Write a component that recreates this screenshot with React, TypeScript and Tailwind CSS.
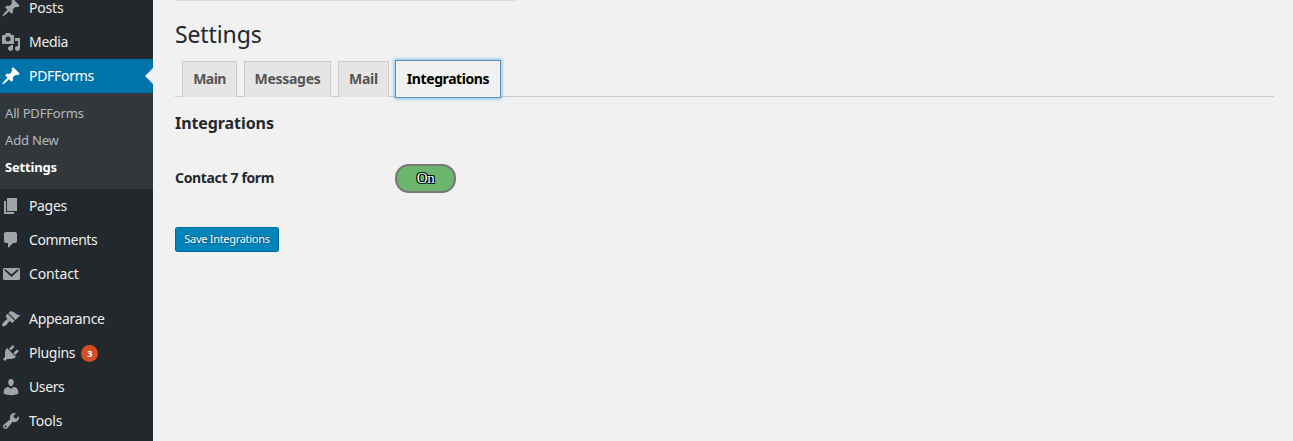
import type { ReactNode } from 'react';

const icons = {
  pin: 'M10.44 3.02l1.82-1.82 6.36 6.35-1.83 1.82c-1.05-.68-2.48-.57-3.41.36l-.75.75c-.92.93-1.04 2.35-.35 3.41l-1.83 1.82-2.41-2.41-2.8 2.79c-.42.42-3.38 2.71-3.8 2.29s1.86-3.39 2.28-3.81l2.79-2.79L4.1 9.36l1.83-1.82c1.05.69 2.48.57 3.4-.36l.75-.75c.93-.92 1.05-2.35.36-3.41z',
  media:
    'M13 11V4c0-.55-.45-1-1-1h-1.67L9 1H5L3.67 3H2c-.55 0-1 .45-1 1v7c0 .55.45 1 1 1h10c.55 0 1-.45 1-1zM7 4.5c1.38 0 2.5 1.12 2.5 2.5S8.38 9.5 7 9.5 4.5 8.38 4.5 7 5.62 4.5 7 4.5zM14 6h5v10.5c0 1.38-1.12 2.5-2.5 2.5S14 17.88 14 16.5s1.12-2.5 2.5-2.5c.17 0 .34.02.5.05V9h-3V6zm-4 8.05V13h2v3.5c0 1.38-1.12 2.5-2.5 2.5S7 17.88 7 16.5 8.12 14 9.5 14c.17 0 .34.02.5.05z',
  page: 'M6 15V2h10v13H6zm-1 1h8v2H3V5h2v11z',
  comment: 'M5 2h9c1.1 0 2 .9 2 2v7c0 1.1-.9 2-2 2h-2l-5 5v-5H5c-1.1 0-2-.9-2-2V4c0-1.1.9-2 2-2z',
  mail: 'M3.5 4h14c.83 0 1.5.67 1.5 1.5v9c0 .83-.67 1.5-1.5 1.5h-14c-.83 0-1.5-.67-1.5-1.5v-9C2 4.67 2.67 4 3.5 4zM4.3 5.3c-.7-.4-1.4.6-.8 1.2l7 6.4 7-6.4c.6-.6-.1-1.6-.8-1.2l-6.2 4.9z',
  brush:
    'M14.48 11.06L7.41 3.99l1.5-1.5c.5-.56 2.3-.47 3.51.32 1.21.8 1.43 1.28 2.91 2.1 1.18.64 2.45 1.26 4.45.85zm-.71.71L6.7 4.7 4.93 6.47c-.39.39-.39 1.02 0 1.41l1.06 1.06c.39.39.39 1.03 0 1.42-.6.6-1.43 1.11-2.21 1.69-.35.26-.7.53-1.01.84C1.43 14.23.4 16.08 1.4 17.07c.99 1 2.84-.03 4.18-1.36.31-.31.58-.66.85-1.02.57-.78 1.08-1.61 1.69-2.21.39-.39 1.02-.39 1.41 0l1.06 1.06c.39.39 1.02.39 1.41 0z',
  plug: 'M13.11 4.36L9.87 7.6 8 5.73l3.24-3.24c.35-.34 1.05-.2 1.56.32.52.51.66 1.21.31 1.55zm-8 1.77l.91-1.12 9.01 9.01-1.19.84c-.71.71-2.63 1.16-3.82 1.16H6.14L4.9 17.26c-.59.59-1.54.59-2.12 0-.59-.58-.59-1.53 0-2.12l1.24-1.24v-3.88c0-1.13.4-3.19 1.09-3.89zm7.26 3.97l3.24-3.24c.34-.35 1.04-.21 1.55.31.52.51.66 1.21.31 1.55l-3.24 3.25z',
  user: 'M10 9.25c-2.27 0-2.73-3.44-2.73-3.44C7 4.02 7.82 2 9.97 2c2.16 0 2.98 2.02 2.71 3.81 0 0-.41 3.44-2.68 3.44zm0 2.57L12.72 10c2.39 0 4.52 2.33 4.52 4.53v2.49s-3.65 1.13-7.24 1.13c-3.65 0-7.24-1.13-7.24-1.13v-2.49c0-2.25 1.94-4.48 4.47-4.48z',
  wrench:
    'M16.68 9.77c-1.34 1.34-3.3 1.67-4.95.99l-5.41 6.52c-.99.99-2.59.99-3.58 0s-.99-2.59 0-3.57l6.52-5.42c-.68-1.65-.35-3.61.99-4.95 1.28-1.28 3.12-1.62 4.72-1.06l-2.89 2.89 2.82 2.82 2.86-2.87c.53 1.58.18 3.39-1.08 4.65zM3.81 16.21c.4.39 1.04.39 1.43 0 .4-.4.4-1.04 0-1.43-.39-.4-1.03-.4-1.43 0-.39.39-.39 1.03 0 1.43z',
};

type ItemProps = {
  icon: keyof typeof icons;
  label: string;
  spacing?: string;
  active?: boolean;
  children?: ReactNode;
};

function MenuItem({ icon, label, spacing = '', active = false, children }: ItemProps) {
  return (
    <a
      className={`relative flex h-[34px] shrink-0 items-center pl-px text-[14px] leading-[14px] ${
        active ? 'bg-[#0073aa] text-white' : 'text-[#eeeeee]'
      }`}
    >
      <svg
        viewBox="0 0 20 20"
        className={`size-5 shrink-0 ${active ? 'text-white' : 'text-[#a0a5aa]'}`}
        fill="currentColor"
        fillRule="evenodd"
      >
        <path d={icons[icon]} />
      </svg>
      <span className={`ml-2 whitespace-nowrap ${spacing}`}>{label}</span>
      {children}
      {active && (
        <span className="absolute top-[9px] right-0 border-y-8 border-r-8 border-y-transparent border-r-[#f1f1f1]" />
      )}
    </a>
  );
}

function Tab({ label, className }: { label: string; className: string }) {
  return (
    <a
      className={`flex h-9 items-center justify-center border border-b-0 border-[#cccccc] bg-[#e5e5e5] pb-0.5 text-[14px] font-bold text-[#555555] ${className}`}
    >
      {label}
    </a>
  );
}

export default function App() {
  return (
    <div className="flex h-[441px] w-full overflow-hidden bg-[#f1f1f1] font-['Noto_Sans',sans-serif] text-[#23282d]">
      <aside className="w-[153px] shrink-0 overflow-hidden bg-[#23282d]">
        <nav className="-mt-[9px] flex flex-col">
          <MenuItem icon="pin" label="Posts" spacing="tracking-[-0.2px]" />
          <MenuItem icon="media" label="Media" spacing="tracking-[-0.3px]" />
          <MenuItem icon="pin" label="PDFForms" spacing="tracking-[-0.3px]" active />
          <div className="flex h-24 flex-col bg-[#32373c] pt-[7px] pl-[5px] text-[13px] leading-[27px] tracking-[-0.18px] text-[#b4b9be]">
            <a>All PDFForms</a>
            <a>Add New</a>
            <a className="font-bold text-white">Settings</a>
          </div>
          <MenuItem icon="page" label="Pages" spacing="tracking-[-0.35px]" />
          <MenuItem icon="comment" label="Comments" spacing="tracking-[-0.45px]" />
          <MenuItem icon="mail" label="Contact" spacing="tracking-[-0.15px]" />
          <div className="h-[11px]" />
          <MenuItem icon="brush" label="Appearance" spacing="tracking-[-0.28px]" />
          <MenuItem icon="plug" label="Plugins" spacing="tracking-[-0.3px]">
            <span className="ml-[6px] flex size-[17px] items-center justify-center rounded-full bg-[#d54e21] text-[9px] leading-none font-bold text-white">
              3
            </span>
          </MenuItem>
          <MenuItem icon="user" label="Users" spacing="tracking-[-0.4px]" />
          <MenuItem icon="wrench" label="Tools" spacing="tracking-[-0.15px]" />
        </nav>
      </aside>

      <main className="flex min-w-0 flex-1 flex-col items-start pr-[19px] pl-[22px]">
        <div className="h-px w-[340px] bg-[#dcdcdc]" />
        <h1 className="mt-[18px] text-[23px] leading-[30px] font-normal tracking-[-0.12px]">Settings</h1>
        <div className="mt-[11px] flex h-[37px] w-full items-start border-b border-[#cccccc] pt-px pl-[7px]">
          <Tab label="Main" className="w-[55px] tracking-[-0.6px]" />
          <Tab label="Messages" className="ml-[7px] w-[87px] tracking-[-0.3px]" />
          <Tab label="Mail" className="ml-[7px] w-[51px] tracking-[-0.2px]" />
          <a className="ml-[6px] flex h-[38px] w-[106px] -translate-y-px items-center justify-center border border-[#5f8fb8] bg-[#f1f1f1] pb-0.5 text-[14px] font-bold tracking-[-0.42px] text-black shadow-[0_0_3px_1px_rgba(91,180,240,0.75)]">
            Integrations
          </a>
        </div>
        <h2 className="mt-[14px] text-[16px] leading-6 font-bold tracking-[-0.08px]">Integrations</h2>
        <div className="mt-[29px] flex h-[29px] items-center">
          <span className="w-[220px] pb-0.5 text-[14px] font-bold tracking-[-0.35px]">Contact 7 form</span>
          <span className="flex h-[29px] w-[61px] items-center justify-center rounded-[14px] border-2 border-[#777777] bg-[#6cb56f] font-['Liberation_Serif',serif] text-[15px] leading-none tracking-[-0.5px] text-white [text-shadow:-1px_-1px_0_#000,1px_-1px_0_#000,-1px_1px_0_#000,1px_1px_0_#000]">
            On
          </span>
        </div>
        <button className="mt-[34px] flex h-[25px] w-[104px] items-center justify-center rounded-[3px] border border-[#006799] border-t-[#0073aa] bg-[#0085ba] text-[11px] tracking-[-0.3px] text-white [text-shadow:0_-1px_1px_#006799,1px_0_1px_#006799,0_1px_1px_#006799,-1px_0_1px_#006799]">
          Save Integrations
        </button>
      </main>
    </div>
  );
}
